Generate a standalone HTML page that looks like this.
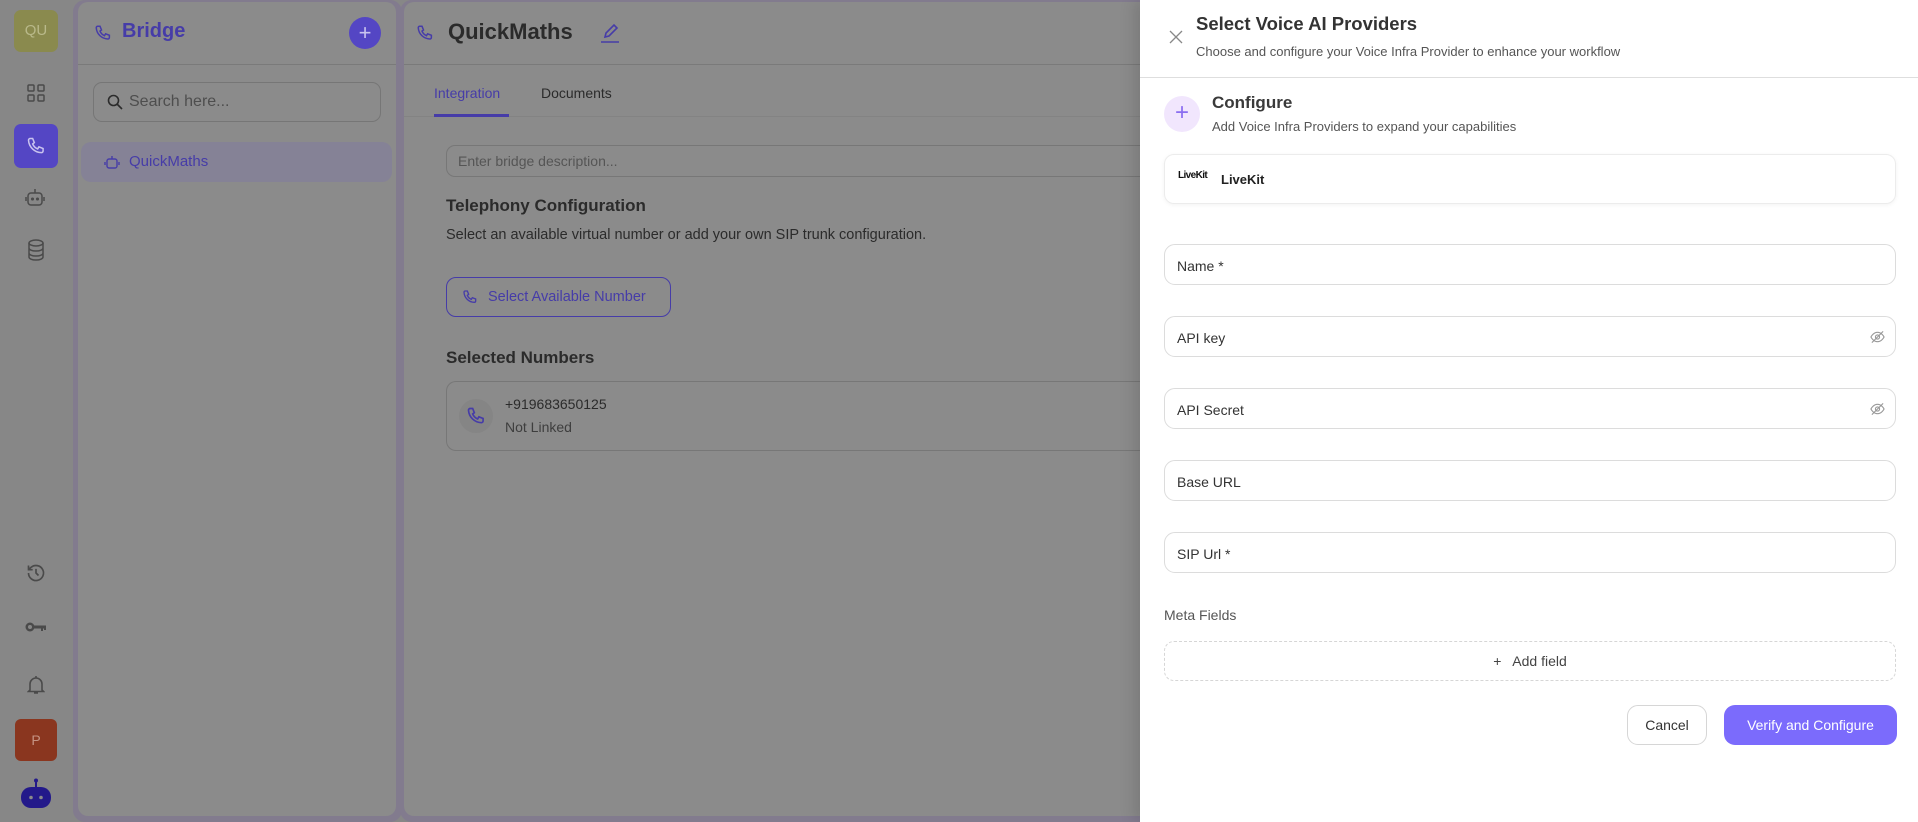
<!DOCTYPE html>
<html><head><meta charset="utf-8"><style>
*{box-sizing:border-box;margin:0;padding:0}
body{width:1918px;height:822px;overflow:hidden;background:#878787;font-family:"Liberation Sans",sans-serif;position:relative}
.abs{position:absolute}
.t{color:#2b2b2b}
.p{color:#463ca8}
svg{display:block}
.field{position:absolute;left:1164px;width:732px;height:41px;border:1px solid #dcdcdc;border-radius:11px;font-size:14px;color:#333;padding:13px 12px;background:#fff}
</style></head><body>
<!-- left rail -->
<div class="abs" style="left:14px;top:10px;width:44px;height:42px;border-radius:7px;background:#8a8a4e;color:#b9b98a;font-size:15px;text-align:center;line-height:42px">QU</div>
<svg class="abs" style="left:27px;top:84px" width="18" height="18" viewBox="0 0 18 18" fill="none" stroke="#4a4a4a" stroke-width="1.5"><rect x="1" y="1" width="6" height="6" rx="1"/><rect x="11" y="1" width="6" height="6" rx="1"/><rect x="1" y="11" width="6" height="6" rx="1"/><rect x="11" y="11" width="6" height="6" rx="1"/></svg>
<div class="abs" style="left:14px;top:124px;width:44px;height:44px;border-radius:7px;background:#5446c4"></div>
<svg class="abs" style="left:26px;top:136px" width="20" height="20" viewBox="0 0 24 24" fill="none" stroke="#c9c3ef" stroke-width="1.8"><path d="M5 3h3l2 5-2 1.5a11 11 0 0 0 6 6L15.5 13l5 2v3a2 2 0 0 1-2 2A16 16 0 0 1 3 5a2 2 0 0 1 2-2z"/></svg>
<svg class="abs" style="left:24px;top:186px" width="22" height="22" viewBox="0 0 22 22" fill="none" stroke="#4a4a4a" stroke-width="1.5"><rect x="4" y="7" width="14" height="12" rx="3"/><path d="M11 7V3M2 11v4M20 11v4"/><circle cx="8.5" cy="13" r=".8" fill="#4a4a4a"/><circle cx="13.5" cy="13" r=".8" fill="#4a4a4a"/></svg>
<svg class="abs" style="left:27px;top:239px" width="18" height="22" viewBox="0 0 18 22" fill="none" stroke="#4a4a4a" stroke-width="1.5"><ellipse cx="9" cy="4" rx="7" ry="3"/><path d="M2 4v14c0 1.7 3 3 7 3s7-1.3 7-3V4M2 9c0 1.7 3 3 7 3s7-1.3 7-3M2 14c0 1.7 3 3 7 3s7-1.3 7-3"/></svg>
<svg class="abs" style="left:26px;top:563px" width="20" height="20" viewBox="0 0 24 24" fill="none" stroke="#4a4a4a" stroke-width="2"><path d="M3 12a9 9 0 1 0 3-6.7L3 8M3 3v5h5M12 7v5l3 3"/></svg>
<svg class="abs" style="left:25px;top:620px" width="22" height="14" viewBox="0 0 22 14" fill="#4a4a4a"><circle cx="5" cy="7" r="4.5"/><circle cx="5" cy="7" r="2" fill="#878787"/><rect x="9" y="5.5" width="12" height="3"/><rect x="16" y="8" width="2" height="3"/><rect x="19" y="8" width="2" height="2"/></svg>
<svg class="abs" style="left:27px;top:675px" width="18" height="20" viewBox="0 0 18 20" fill="none" stroke="#4a4a4a" stroke-width="1.6"><path d="M3 15V9a6 6 0 0 1 12 0v6l1.5 1.5h-15zM9 1v2M7 18h4"/></svg>
<div class="abs" style="left:15px;top:719px;width:42px;height:42px;border-radius:6px;background:#8a361f;color:#c59383;font-size:14px;text-align:center;line-height:42px">P</div>
<svg class="abs" style="left:20px;top:778px" width="32" height="31" viewBox="0 0 32 31" fill="#23198a"><circle cx="16" cy="2.5" r="2"/><rect x="15" y="3" width="2" height="6"/><rect x="1" y="9" width="30" height="21" rx="10"/><circle cx="11" cy="19.5" r="1.8" fill="#8a8a8a"/><circle cx="21" cy="19.5" r="1.8" fill="#8a8a8a"/></svg>

<!-- bridge panel -->
<div class="abs" style="left:73px;top:0;width:329px;height:822px;background:#827b8e;border-radius:12px"></div>
<div class="abs" style="left:78px;top:2px;width:318px;height:814px;background:#8b8b8b;border-radius:10px"></div>
<div class="abs" style="left:78px;top:64px;width:318px;height:1px;background:#7a7a7a"></div>
<svg class="abs" style="left:94px;top:24px" width="18" height="18" viewBox="0 0 24 24" fill="none" stroke="#463ca8" stroke-width="2"><path d="M5 3h3l2 5-2 1.5a11 11 0 0 0 6 6L15.5 13l5 2v3a2 2 0 0 1-2 2A16 16 0 0 1 3 5a2 2 0 0 1 2-2z"/></svg>
<div class="abs p" style="left:122px;top:20px;font-size:20px;font-weight:bold">Bridge</div>
<div class="abs" style="left:349px;top:17px;width:32px;height:32px;border-radius:50%;background:#5446c4;color:#c9c3ef;font-size:22px;text-align:center;line-height:31px">+</div>
<div class="abs" style="left:93px;top:82px;width:288px;height:40px;border:1px solid #767676;border-radius:9px"></div>
<svg class="abs" style="left:107px;top:94px" width="16" height="16" viewBox="0 0 16 16" fill="none" stroke="#2b2b2b" stroke-width="1.6"><circle cx="6.5" cy="6.5" r="5"/><path d="M10 10l5 5"/></svg>
<div class="abs" style="left:129px;top:93px;font-size:16px;color:#4e4e4e">Search here...</div>
<div class="abs" style="left:81px;top:142px;width:311px;height:40px;border-radius:10px;background:#858296"></div>
<svg class="abs" style="left:104px;top:154px" width="16" height="16" viewBox="0 0 16 16" fill="none" stroke="#463ca8" stroke-width="1.4"><rect x="3" y="5" width="10" height="9" rx="2"/><path d="M8 5V2M1 8v3M15 8v3"/></svg>
<div class="abs p" style="left:129px;top:153px;font-size:15px">QuickMaths</div>

<!-- main panel -->
<div class="abs" style="left:400px;top:0;width:800px;height:822px;background:#827b8e;border-radius:12px 0 0 12px"></div>
<div class="abs" style="left:404px;top:2px;width:800px;height:814px;background:#8b8b8b;border-radius:10px 0 0 10px"></div>
<div class="abs" style="left:404px;top:64px;width:740px;height:1px;background:#7a7a7a"></div>
<div class="abs" style="left:404px;top:116px;width:740px;height:1px;background:#838383"></div>
<svg class="abs" style="left:416px;top:24px" width="18" height="18" viewBox="0 0 24 24" fill="none" stroke="#463ca8" stroke-width="2"><path d="M5 3h3l2 5-2 1.5a11 11 0 0 0 6 6L15.5 13l5 2v3a2 2 0 0 1-2 2A16 16 0 0 1 3 5a2 2 0 0 1 2-2z"/></svg>
<div class="abs t" style="left:448px;top:19px;font-size:22px;font-weight:bold">QuickMaths</div>
<svg class="abs" style="left:600px;top:22px" width="20" height="22" viewBox="0 0 20 22" fill="none" stroke="#463ca8" stroke-width="1.6"><path d="M5 15l1-4 8-8 3 3-8 8z"/><path d="M1 20h18"/></svg>
<div class="abs p" style="left:434px;top:85px;font-size:14px">Integration</div>
<div class="abs" style="left:434px;top:114px;width:75px;height:3px;background:#463ca8"></div>
<div class="abs t" style="left:541px;top:85px;font-size:14px">Documents</div>
<div class="abs" style="left:446px;top:145px;width:700px;height:32px;border:1px solid #777;border-right:none;border-radius:9px 0 0 9px"></div>
<div class="abs" style="left:458px;top:153px;font-size:14px;color:#555">Enter bridge description...</div>
<div class="abs t" style="left:446px;top:196px;font-size:17px;font-weight:bold">Telephony Configuration</div>
<div class="abs t" style="left:446px;top:227px;font-size:14.5px">Select an available virtual number or add your own SIP trunk configuration.</div>
<div class="abs" style="left:446px;top:277px;width:225px;height:40px;border:1px solid #463ca8;border-radius:10px"></div>
<svg class="abs" style="left:462px;top:289px" width="16" height="16" viewBox="0 0 24 24" fill="none" stroke="#463ca8" stroke-width="2"><path d="M5 3h3l2 5-2 1.5a11 11 0 0 0 6 6L15.5 13l5 2v3a2 2 0 0 1-2 2A16 16 0 0 1 3 5a2 2 0 0 1 2-2z"/></svg>
<div class="abs p" style="left:488px;top:289px;font-size:14.5px">Select Available Number</div>
<div class="abs t" style="left:446px;top:348px;font-size:17px;font-weight:bold">Selected Numbers</div>
<div class="abs" style="left:446px;top:381px;width:700px;height:70px;border:1px solid #777;border-right:none;border-radius:10px 0 0 10px"></div>
<div class="abs" style="left:459px;top:399px;width:34px;height:34px;border-radius:50%;background:#858585"></div>
<svg class="abs" style="left:466px;top:406px" width="20" height="20" viewBox="0 0 24 24" fill="none" stroke="#463ca8" stroke-width="2"><path d="M5 3h3l2 5-2 1.5a11 11 0 0 0 6 6L15.5 13l5 2v3a2 2 0 0 1-2 2A16 16 0 0 1 3 5a2 2 0 0 1 2-2z"/></svg>
<div class="abs t" style="left:505px;top:396px;font-size:14px">+919683650125</div>
<div class="abs" style="left:505px;top:419px;font-size:14px;color:#3e3e3e">Not Linked</div>

<!-- drawer -->
<div class="abs" style="left:1140px;top:0;width:778px;height:822px;background:#fff;box-shadow:-6px 0 14px rgba(0,0,0,.12)"></div>
<svg class="abs" style="left:1169px;top:30px" width="14" height="14" viewBox="0 0 14 14" stroke="#888" stroke-width="1.3"><path d="M1 1l12 12M13 1L1 13"/></svg>
<div class="abs" style="left:1196px;top:13px;font-size:18.5px;font-weight:bold;color:#333">Select Voice AI Providers</div>
<div class="abs" style="left:1196px;top:44px;font-size:13px;color:#555">Choose and configure your Voice Infra Provider to enhance your workflow</div>
<div class="abs" style="left:1140px;top:77px;width:778px;height:1px;background:#dedede"></div>
<div class="abs" style="left:1164px;top:96px;width:36px;height:36px;border-radius:50%;background:#f1e6fd"></div>
<div class="abs" style="left:1164px;top:96px;width:36px;height:36px;text-align:center;line-height:34px;font-size:24px;color:#8a6ef0">+</div>
<div class="abs" style="left:1212px;top:93px;font-size:17px;font-weight:bold;color:#3a3a3a">Configure</div>
<div class="abs" style="left:1212px;top:119px;font-size:13px;color:#555">Add Voice Infra Providers to expand your capabilities</div>
<div class="abs" style="left:1164px;top:154px;width:732px;height:50px;border:1px solid #ececec;border-radius:10px;box-shadow:0 1px 4px rgba(0,0,0,.05)"></div>
<div class="abs" style="left:1178px;top:170px;font-size:10px;font-weight:bold;color:#111;letter-spacing:-.6px">LiveKit</div>
<div class="abs" style="left:1221px;top:172px;font-size:13px;font-weight:bold;color:#222">LiveKit</div>
<div class="field" style="top:244px">Name *</div>
<div class="field" style="top:316px">API key</div>
<div class="field" style="top:388px">API Secret</div>
<div class="field" style="top:460px">Base URL</div>
<div class="field" style="top:532px">SIP Url *</div>
<svg class="abs" style="left:1870px;top:330px" width="15" height="14" viewBox="0 0 16 14" fill="none" stroke="#999" stroke-width="1.2"><path d="M1 7s2.5-5 7-5 7 5 7 5-2.5 5-7 5-7-5-7-5z"/><circle cx="8" cy="7" r="2.2"/><path d="M2 13L14 1"/></svg>
<svg class="abs" style="left:1870px;top:402px" width="15" height="14" viewBox="0 0 16 14" fill="none" stroke="#999" stroke-width="1.2"><path d="M1 7s2.5-5 7-5 7 5 7 5-2.5 5-7 5-7-5-7-5z"/><circle cx="8" cy="7" r="2.2"/><path d="M2 13L14 1"/></svg>
<div class="abs" style="left:1164px;top:607px;font-size:14px;color:#555">Meta Fields</div>
<div class="abs" style="left:1164px;top:641px;width:732px;height:40px;border:1px dashed #d6d6d6;border-radius:10px;text-align:center;line-height:38px;font-size:14px;color:#444">+&nbsp;&nbsp; Add field</div>
<div class="abs" style="left:1627px;top:705px;width:80px;height:40px;border:1px solid #d6d6d6;border-radius:11px;text-align:center;line-height:38px;font-size:14px;color:#333">Cancel</div>
<div class="abs" style="left:1724px;top:705px;width:173px;height:40px;background:#7b6bfc;border-radius:11px;text-align:center;line-height:40px;font-size:14px;color:#fff">Verify and Configure</div>
</body></html>
